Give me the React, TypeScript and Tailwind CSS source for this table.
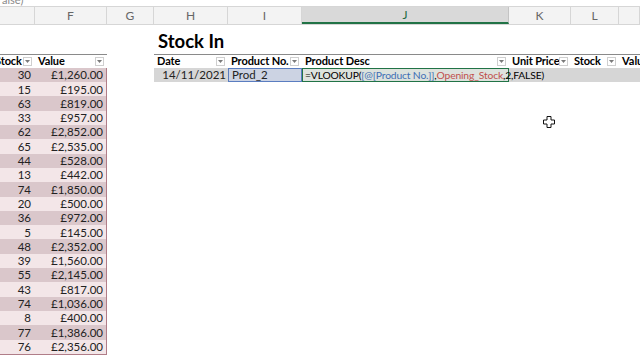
import React from 'react';

const stockRows = [
  { stock: 30, value: '£1,260.00' },
  { stock: 15, value: '£195.00' },
  { stock: 63, value: '£819.00' },
  { stock: 33, value: '£957.00' },
  { stock: 62, value: '£2,852.00' },
  { stock: 65, value: '£2,535.00' },
  { stock: 44, value: '£528.00' },
  { stock: 13, value: '£442.00' },
  { stock: 74, value: '£1,850.00' },
  { stock: 20, value: '£500.00' },
  { stock: 36, value: '£972.00' },
  { stock: 5, value: '£145.00' },
  { stock: 48, value: '£2,352.00' },
  { stock: 39, value: '£1,560.00' },
  { stock: 55, value: '£2,145.00' },
  { stock: 43, value: '£817.00' },
  { stock: 74, value: '£1,036.00' },
  { stock: 8, value: '£400.00' },
  { stock: 77, value: '£1,386.00' },
  { stock: 76, value: '£2,356.00' },
];

const columns = [
  { label: '', width: 'w-[35px]' },
  { label: 'F', width: 'w-[72px]' },
  { label: 'G', width: 'w-[47px]' },
  { label: 'H', width: 'w-[74px]' },
  { label: 'I', width: 'w-[74px]' },
  { label: 'J', width: 'w-[207px]', selected: true },
  { label: 'K', width: 'w-[62px]' },
  { label: 'L', width: 'w-[48px]' },
  { label: '', width: 'flex-1' },
];

const FilterButton = () => (
  <div className="w-[9px] h-[9px] shrink-0 border border-[#cfcfcf] bg-white flex items-center justify-center">
    <svg width="5" height="3" viewBox="0 0 5 3">
      <path d="M0 0h5L2.5 3z" fill="#7a7a7a" />
    </svg>
  </div>
);

const HeaderCell = ({ label, width, first }: { label: string; width: string; first?: boolean }) => (
  <div className={`${width} h-full flex items-center justify-between pr-[3px] pl-[3px] overflow-hidden`}>
    <span className={`font-bold text-[11px] tracking-[-0.1px] text-black whitespace-nowrap ${first ? '-ml-[8px]' : ''}`}>{label}</span>
    <FilterButton />
  </div>
);

const CellCursor = () => (
  <svg width="12" height="12" viewBox="0 0 12 12" className="absolute left-[543px] top-[116px]">
    <path d="M4 0.5h4v3.5h3.5v4H8v3.5H4V8H0.5V4H4z" fill="#fff" stroke="#111" strokeWidth="1" />
  </svg>
);

export default function App() {
  return (
    <div className="relative w-[640px] h-[360px] overflow-hidden bg-white font-['Lato',sans-serif] text-[11.5px] text-[#222]">
      {/* tail of the formula bar */}
      <div className="h-[6px] overflow-hidden pl-[2px]">
        <div className="-mt-[6px] text-[11px] leading-none text-[#8a8a8a]">alse)</div>
      </div>

      {/* column letters */}
      <div className="flex h-[19px] bg-[#f3f3f3] border-t border-b border-[#d6d6d6]">
        {columns.map((col, i) => (
          <div
            key={i}
            className={`${col.width} h-full flex items-center justify-center border-r text-[12px] ${
              col.selected
                ? 'bg-[#d9d9d9] border-[#c4c4c4] border-b-2 border-b-[#217346] text-[#1e6b42]'
                : 'border-[#d6d6d6] text-[#666]'
            }`}
          >
            {col.label}
          </div>
        ))}
      </div>

      <div className="flex">
        {/* Opening stock table (cols E:F) */}
        <div className="w-[107px] shrink-0 flex flex-col">
          <div className="h-[28.6px]" />
          <div className="flex h-[14.3px] border-t border-[#8a8a8a] bg-white">
            <HeaderCell label="Stock" width="w-[35px]" first />
            <HeaderCell label="Value" width="w-[72px]" />
          </div>
          <div className="border-r border-b border-[#b07d88]">
            {stockRows.map((row, i) => (
              <div
                key={i}
                className={`flex h-[14.3px] items-center leading-none ${i % 2 === 0 ? 'bg-[#dac7cb]' : 'bg-[#f3e6e8]'}`}
              >
                <div className="w-[35px] text-right pr-[4px]">{row.stock}</div>
                <div className="w-[71px] text-right pr-[3px]">{row.value}</div>
              </div>
            ))}
          </div>
        </div>

        {/* column G */}
        <div className="w-[47px] shrink-0" />

        {/* Stock In table */}
        <div className="flex-1 flex flex-col">
          <div className="h-[14.3px]" />
          <div className="h-[14.3px] flex items-end pl-[4px]">
            <span className="font-bold text-[18.5px] leading-none mb-[3px] text-black whitespace-nowrap">Stock In</span>
          </div>
          <div className="flex h-[14.3px] border-t border-[#8a8a8a]">
            <HeaderCell label="Date" width="w-[74px]" />
            <HeaderCell label="Product No." width="w-[74px]" />
            <HeaderCell label="Product Desc" width="w-[207px]" />
            <HeaderCell label="Unit Price" width="w-[62px]" />
            <HeaderCell label="Stock" width="w-[48px]" />
            <div className="flex-1 h-full flex items-center pl-[3px] overflow-hidden">
              <span className="font-bold text-[11px] text-black whitespace-nowrap">Value</span>
            </div>
          </div>
          <div className="flex h-[14.3px] bg-[#d6d6d6] leading-none">
            <div className="w-[74px] flex items-center justify-end pr-[2px]">14/11/2021</div>
            <div className="w-[74px] flex items-center pl-[3px] bg-[#ccd3e3] border border-[#5a7dc0]">Prod_2</div>
            <div className="w-[207px] flex items-center pl-[2px] bg-[#dde2dd] border border-[#217346] overflow-visible whitespace-nowrap relative z-10 text-[10.3px] tracking-[-0.15px]">
              <span className="text-black">=VLOOKUP(</span>
              <span className="text-[#3f6fb5]">[@[Product No.]]</span>
              <span className="text-black">,</span>
              <span className="text-[#c0504d]">Opening_Stock</span>
              <span className="text-black">,2,FALSE)</span>
              <span className="w-px h-[11px] bg-black ml-px" />
            </div>
            <div className="flex-1" />
          </div>
        </div>
      </div>

      <CellCursor />
    </div>
  );
}
